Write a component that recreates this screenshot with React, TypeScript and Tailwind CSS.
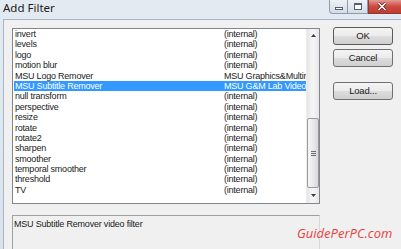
import React from "react";

const rows: [string, string][] = [
  ["invert", "(internal)"],
  ["levels", "(internal)"],
  ["logo", "(internal)"],
  ["motion blur", "(internal)"],
  ["MSU Logo Remover", "MSU Graphics&Multimedia Lab"],
  ["MSU Subtitle Remover", "MSU G&M Lab Video"],
  ["null transform", "(internal)"],
  ["perspective", "(internal)"],
  ["resize", "(internal)"],
  ["rotate", "(internal)"],
  ["rotate2", "(internal)"],
  ["sharpen", "(internal)"],
  ["smoother", "(internal)"],
  ["temporal smoother", "(internal)"],
  ["threshold", "(internal)"],
  ["TV", "(internal)"],
];

const listFont = { fontFamily: '"Liberation Sans", Arial, sans-serif' };

function Btn({ label, def }: { label: string; def?: boolean }) {
  return (
    <div
      className={`flex h-[18px] w-[60px] items-center justify-center rounded-[3px] border ${
        def ? "border-[#5a5a5a]" : "border-[#707070]"
      } bg-[linear-gradient(#f4f4f4_0%,#ebebeb_50%,#dddddd_51%,#cfcfcf_100%)] text-[9.5px] tracking-[-0.2px] text-[#1a1a1a]`}
      style={listFont}
    >
      {label}
    </div>
  );
}

export default function App() {
  return (
    <div className="relative flex h-[249px] w-[401px] flex-col overflow-hidden bg-[linear-gradient(#e4eaf1,#d9e2eb)]">
      {/* title bar */}
      <div className="flex h-[19px] shrink-0 items-start justify-between">
        <div
          className="pl-[3px] pt-[1px] text-[11.5px] leading-[14px] text-[#1b1b1b]"
          style={{ fontFamily: '"Noto Sans", "Open Sans", sans-serif' }}
        >
          Add Filter
        </div>
        <div className="flex">
          <div className="flex h-[14px] w-[19px] items-center justify-center rounded-bl-[4px] border border-t-0 border-[#8d9cb0] bg-[linear-gradient(#eef2f6,#d3dce6)]">
            <div className="mt-[3px] h-[3px] w-[8px] border border-[#55606e] bg-white" />
          </div>
          <div className="flex h-[14px] w-[20px] items-center justify-center border border-l-0 border-t-0 border-[#8d9cb0] bg-[linear-gradient(#eef2f6,#d3dce6)]">
            <div className="h-[7px] w-[8px] border border-[#55606e] border-t-2 bg-white" />
          </div>
          <div className="flex h-[14px] w-[33px] items-center justify-center border-b border-l border-[#8a3b36] bg-[linear-gradient(#e39b94,#cc4a40_50%,#c13a2f)] pr-[6px]">
            <svg width="10" height="9" viewBox="0 0 10 9">
              <path d="M1.5 1 L8.5 8 M8.5 1 L1.5 8" stroke="#5a1f1a" strokeWidth="3" />
              <path d="M1.5 1 L8.5 8 M8.5 1 L1.5 8" stroke="#ffffff" strokeWidth="1.6" />
            </svg>
          </div>
        </div>
      </div>

      {/* frame + client */}
      <div className="flex flex-1 pl-[3px]">
        <div className="flex flex-1 border-l border-t border-[#a9b6c6] bg-[#f0f0f0]">
          {/* left column */}
          <div className="ml-[8px] mt-[8px] flex w-[308px] flex-col">
            <div className="flex h-[176px] border border-[#82878f] bg-white">
              <div className="flex-1 overflow-hidden pl-[1px]" style={listFont}>
                {rows.map(([name, src], i) => {
                  const sel = i === 5;
                  return (
                    <div
                      key={name}
                      className={`flex h-[10.4px] items-center whitespace-nowrap pl-[1px] text-[9px] leading-[10.4px] tracking-[-0.22px] ${
                        sel ? "bg-[#3399ff] text-white" : "text-[#1a1a1a]"
                      }`}
                    >
                      <div className="w-[209px] shrink-0">{name}</div>
                      <div className="flex-1 overflow-hidden">{src}</div>
                    </div>
                  );
                })}
              </div>
              {/* scrollbar */}
              <div className="flex w-[13px] flex-col border-l border-[#ececec] bg-[linear-gradient(90deg,#e6e6e6,#f4f4f4_40%,#f4f4f4_60%,#e6e6e6)]">
                <div className="flex h-[12px] items-center justify-center">
                  <svg width="5" height="3" viewBox="0 0 5 3">
                    <path d="M0 3 L2.5 0 L5 3 Z" fill="#3c3c3c" />
                  </svg>
                </div>
                <div className="h-[77px]" />
                <div className="flex h-[70px] flex-col items-center justify-center gap-[1px] rounded-[2px] border border-[#9a9a9a] bg-[linear-gradient(90deg,#f6f6f6,#e9e9e9_50%,#d9d9d9)]">
                  <div className="h-[1px] w-[5px] bg-[#6b6b6b]" />
                  <div className="h-[1px] w-[5px] bg-[#6b6b6b]" />
                  <div className="h-[1px] w-[5px] bg-[#6b6b6b]" />
                </div>
                <div className="flex flex-1 items-center justify-center">
                  <svg width="5" height="3" viewBox="0 0 5 3">
                    <path d="M0 0 L5 0 L2.5 3 Z" fill="#3c3c3c" />
                  </svg>
                </div>
              </div>
            </div>
            {/* description */}
            <div
              className="mt-[11px] h-[40px] border-l border-t border-r border-l-[#a0a0a0] border-t-[#a0a0a0] border-r-[#d8d8d8] bg-[#f0f0f0] pl-[1px] pt-[3px] text-[9px] leading-[10px] tracking-[-0.2px] text-[#1a1a1a]"
              style={listFont}
            >
              MSU Subtitle Remover video filter
            </div>
          </div>

          {/* right buttons */}
          <div className="ml-[13px] mt-[7px] flex flex-col">
            <Btn label="OK" def />
            <div className="h-[4px]" />
            <Btn label="Cancel" />
            <div className="h-[15px]" />
            <Btn label="Load..." />
          </div>
        </div>
      </div>

      {/* watermark */}
      <div
        className="absolute left-[297px] top-[224px] text-[13px] italic text-[#e6423d]"
        style={{ fontFamily: '"Open Sans", "Noto Sans", sans-serif' }}
      >
        GuidePerPC.com
      </div>
    </div>
  );
}
